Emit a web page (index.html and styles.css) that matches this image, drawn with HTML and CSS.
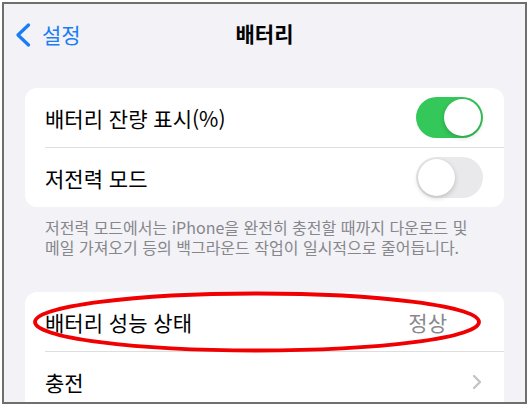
FILE: index.html
```html
<!DOCTYPE html>
<html lang="ko">
<head>
<meta charset="UTF-8" />
<meta name="viewport" content="width=device-width, initial-scale=1" />
<title>배터리</title>
<link rel="stylesheet" href="styles.css">
</head>
<body>
  <div class="frame">
    <!-- NAV BAR -->
    <div class="nav">
      <a class="back" href="#">
        <svg class="back-icon" width="16" height="24" viewBox="0 0 16 24">
          <polyline points="13.5,2 3,12 13.5,22" fill="none" stroke="#1a7cf6" stroke-width="3.2" stroke-linecap="round" stroke-linejoin="round"/>
        </svg>
        <span>설정</span>
      </a>
      <div class="nav-title">배터리</div>
      <div></div>
    </div>

    <!-- BATTERY OPTIONS -->
    <div class="group">
      <div class="row">
        <span class="row-label">배터리 잔량 표시(%)</span>
        <span class="switch on"><span class="knob"></span></span>
      </div>
      <div class="row">
        <span class="row-label">저전력 모드</span>
        <span class="switch"><span class="knob"></span></span>
      </div>
    </div>
    <p class="footnote">저전력 모드에서는 iPhone을 완전히 충전할 때까지 다운로드 및 메일 가져오기 등의 백그라운드 작업이 일시적으로 줄어듭니다.</p>

    <!-- HEALTH -->
    <div class="group">
      <div class="row">
        <span class="row-label">배터리 성능 상태</span>
        <span class="row-value">정상</span>
      </div>
      <div class="row">
        <span class="row-label">충전</span>
        <svg class="chevron" width="10" height="16" viewBox="0 0 10 16">
          <polyline points="2,2 8,8 2,14" fill="none" stroke="#c4c4c7" stroke-width="2.4" stroke-linecap="round" stroke-linejoin="round"/>
        </svg>
      </div>
    </div>

    <!-- red marker drawn over the health row -->
    <svg class="marker" width="452" height="64" viewBox="0 0 452 64">
      <ellipse cx="226" cy="32" rx="222" ry="28.5" fill="none" stroke="#f00000" stroke-width="3.8"/>
    </svg>
  </div>
</body>
</html>
```

FILE: styles.css
```css
html, body {
  margin: 0;
  padding: 0;
  background: #fff;
  font-family: "Noto Sans CJK KR", "Noto Sans", sans-serif;
}
.frame {
  position: relative;
  box-sizing: border-box;
  width: 525px;
  height: 402px;
  margin: 2px 0 0 2px;
  border: 2px solid #6f6f6f;
  background: #f2f2f7;
  overflow: hidden;
}
.nav {
  display: grid;
  grid-template-columns: 1fr auto 1fr;
  align-items: center;
  height: 62px;
  padding: 0 11px;
}
.back {
  display: flex;
  align-items: center;
  gap: 11px;
  color: #1a7cf6;
  text-decoration: none;
  font-size: 21px;
}
.back span {
  position: relative;
  top: -1px;
}
.nav-title {
  font-size: 21px;
  font-weight: 700;
  color: #000;
  margin-top: -4px;
}
.group {
  margin: 22px 21px 0;
  background: #fff;
  border-radius: 12px;
  overflow: hidden;
}
.row {
  position: relative;
  display: flex;
  align-items: center;
  justify-content: space-between;
  height: 59px;
  padding: 0 21px 0 20px;
}
.row + .row {
  padding-top: 1px;
}
.row + .row::after {
  content: "";
  position: absolute;
  top: 0;
  left: 20px;
  right: 0;
  height: 1px;
  background: #dedee1;
}
.row-label {
  font-size: 21px;
  color: #000;
}
.row-value {
  font-size: 21px;
  color: #8a8a8e;
  margin-right: 36px;
}
.switch {
  position: relative;
  width: 67px;
  height: 41px;
  border-radius: 21px;
  background: #e9e9eb;
}
.switch.on {
  background: #34c759;
}
.knob {
  position: absolute;
  top: 2px;
  left: 2px;
  width: 37px;
  height: 37px;
  border-radius: 50%;
  background: #fff;
  box-shadow: 0 2px 5px rgba(0,0,0,0.18), 0 0 1px rgba(0,0,0,0.1);
}
.switch.on .knob {
  left: 28px;
}
.chevron {
  margin-right: 1px;
}
.footnote {
  margin: 10px 21px 0;
  padding: 0 20px;
  font-size: 16px;
  line-height: 20px;
  color: #86868b;
  word-break: keep-all;
}
.footnote + .group {
  margin-top: 35px;
}
.marker {
  position: absolute;
  left: 27px;
  top: 286px;
}
```
